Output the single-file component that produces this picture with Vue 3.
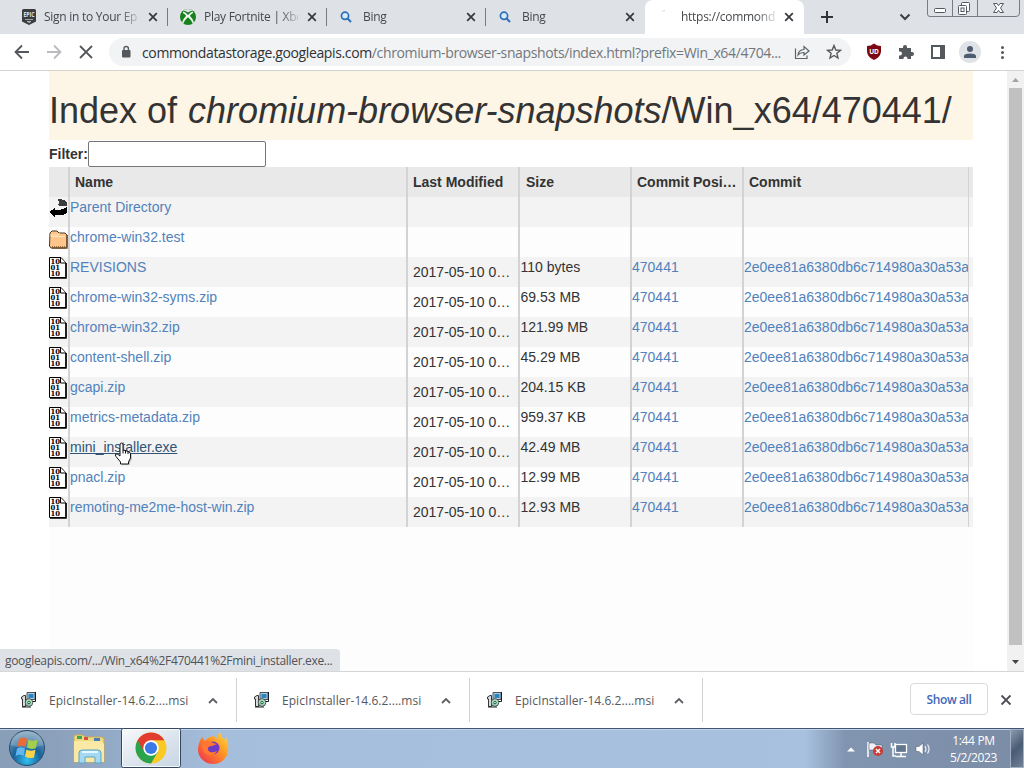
<template>
  <div class="screen">
    <header class="tab-strip">
      <div class="tabs">
        <div v-for="(tab, i) in tabs" :key="i" class="tab" :class="{ active: tab.active }">
          <span class="favicon">
            <svg v-if="tab.icon === 'epic'" width="16" height="18" viewBox="0 0 16 18">
              <path d="M2.500 1H13.500Q15 1 15 2.500V13.500L8 17L1 13.500V2.500Q1 1 2.500 1Z" fill="#3a3c3f" />
              <text x="2.400" y="9" font-size="7.500" font-weight="700" textLength="11.200" lengthAdjust="spacingAndGlyphs" fill="#dfe1e4">EPIC</text>
              <path d="M4 11.500H12M6 13.500H10L8 14.500Z" stroke="#b9bcc0" stroke-width=".8" fill="#b9bcc0" />
            </svg>
            <svg v-else-if="tab.icon === 'xbox'" width="16" height="16" viewBox="0 0 16 16">
              <circle cx="8" cy="8" r="8" fill="#17811b" />
              <path d="M3 1.900Q5.300 1.600 8 3.500Q10.700 1.600 13 1.900Q11.700 .2 8 0Q4.300 .2 3 1.900Z" fill="#dee1e6" />
              <path d="M3.200 2.600Q5 2.800 8 6Q11 2.800 12.800 2.600L13.200 4Q11.500 4.500 9.800 6.800Q13.500 10.500 14 13.500L12.800 14.500Q11.500 11 8 8.300Q4.500 11 3.200 14.500L2 13.500Q2.500 10.500 6.200 6.800Q4.500 4.500 2.800 4Z" fill="#eef5ee" />
            </svg>
            <svg v-else-if="tab.icon === 'search'" width="14" height="14" viewBox="0 0 14 14">
              <circle cx="6" cy="5.800" r="3.600" fill="#d9e9fa" stroke="#2b71b8" stroke-width="1.700" />
              <path d="M8.600 8.500L12 12" stroke="#2b71b8" stroke-width="2" />
            </svg>
            <svg v-else width="16" height="16" viewBox="0 0 16 16">
              <path d="M5 2.200Q6.500 1.400 8 1.700" stroke="#d3d6da" fill="none" />
            </svg>
          </span>
          <span class="tab-title">{{ tab.title }}</span>
          <svg class="tab-close" width="10" height="10" viewBox="0 0 10 10">
            <path d="M1.200 1.200L8.800 8.800M8.800 1.200L1.200 8.800" stroke="#35383c" stroke-width="1.700" />
          </svg>
        </div>
      </div>
      <svg class="new-tab" width="14" height="14" viewBox="0 0 14 14">
        <path d="M7 1V13M1 7H13" stroke="#303337" stroke-width="2" />
      </svg>
      <svg class="tab-search" width="12" height="8" viewBox="0 0 12 8">
        <path d="M1.500 1.500L6 6L10.500 1.500" stroke="#3c4043" stroke-width="2" fill="none" />
      </svg>
      <div class="window-buttons">
        <svg width="93" height="17" viewBox="0 0 93 17" fill="none" stroke="#777b82">
          <path d="M.5 0V14Q.5 16.500 3 16.500H89Q92.500 16.500 92.500 13V0M25.500 0V16M50.500 0V16" />
          <rect x="7.500" y="8.500" width="11" height="4" rx="1" fill="#fff" stroke="#555960" />
          <g fill="#fff" stroke="#555960">
            <rect x="34.500" y="2.500" width="8" height="9" rx="1" />
            <rect x="31.500" y="5.500" width="8" height="9" rx="1" />
            <rect x="34" y="8" width="3" height="3.500" />
            <path d="M66.500 3.500H70L71.500 5.700L73 3.500H76.500L73.500 8L76.500 12.500H73L71.500 10.300L70 12.500H66.500L69.500 8Z" />
          </g>
        </svg>
      </div>
    </header>

    <nav class="toolbar">
      <svg class="nav-icons" width="109" height="36" viewBox="0 0 109 36" fill="none" stroke-width="1.800">
        <path d="M29 18H16M22 11.500L15.500 18L22 24.500" stroke="#54575b" />
        <path d="M47 18H60M54 11.500L60.500 18L54 24.500" stroke="#b9bbbe" />
        <path d="M80 12L92 24M92 12L80 24" stroke="#54575b" />
      </svg>
      <div class="omnibox">
        <svg width="10" height="14" viewBox="0 0 10 14">
          <rect x="1" y="5" width="8.500" height="7.500" rx="1" fill="#55585c" />
          <path d="M3 5V3.500Q3 1.500 5.200 1.500Q7.400 1.500 7.400 3.500V5" fill="none" stroke="#55585c" stroke-width="1.400" />
        </svg>
        <span class="url"><b>commondatastorage.googleapis.com</b>/chromium-browser-snapshots/index.html?prefix=Win_x64/4704...</span>
        <svg class="share" width="16" height="16" viewBox="0 0 16 16" fill="none" stroke="#5f6368" stroke-width="1.200">
          <path d="M1.500 4.500V14.500H13V11.500M4 11Q4.500 6 10 5.500V2.500L15 7L10 11V8.500Q6 8.500 4 11Z" />
        </svg>
        <svg class="star" width="16" height="16" viewBox="0 0 16 16">
          <path d="M8 1.500L9.800 6L14.500 6.300L10.900 9.300L12 14L8 11.500L4 14L5.100 9.300L1.500 6.300L6.200 6Z" fill="none" stroke="#55585c" stroke-width="1.400" />
        </svg>
      </div>
      <svg class="extensions" width="173" height="36" viewBox="851 34 173 36">
        <path d="M867 46Q871 46 874 43.500Q877 46 881 46V52Q880 57.500 874 60Q868 57.500 867 52Z" fill="#7d0712" />
        <text x="874" y="54" font-size="6.500" font-weight="700" text-anchor="middle" fill="#fff">UD</text>
        <path d="M899 48H903V47A2 2 0 0 1 907 47V48H911V52H912A2 2 0 0 1 912 56H911V59H907.500V58.500A2 2 0 0 0 903.500 58.500V59H899V55.500H900A2 2 0 0 0 900 51.500H899Z" fill="#55585c" />
        <rect x="932" y="46" width="12" height="12" fill="#fff" stroke="#55585c" stroke-width="2" />
        <path d="M940 45H945V59H940Z" fill="#55585c" />
        <circle cx="970" cy="52" r="11" fill="#dfe2e6" />
        <circle cx="970" cy="49" r="3" fill="#4d5c70" />
        <path d="M964 58V56Q964 53.500 970 53.500Q976 53.500 976 56V58Z" fill="#4d5c70" />
        <g fill="#55585c"><circle cx="1002.500" cy="47.500" r="1.500" /><circle cx="1002.500" cy="52.500" r="1.500" /><circle cx="1002.500" cy="57.500" r="1.500" /></g>
      </svg>
    </nav>

    <main class="viewport">
      <div class="page">
        <h1>Index of <i>chromium-browser-snapshots</i>/Win_x64/470441/</h1>
        <div class="filter"><label for="filter">Filter:</label><input id="filter" v-model="filter" type="text"></div>
        <div class="listing">
          <div class="row head">
            <span class="cell"></span>
            <span v-for="name in columns" :key="name" class="cell">{{ name }}</span>
          </div>
          <div v-for="file in files" :key="file.name" class="row">
            <span class="cell icon">
              <svg v-if="file.kind === 'up'" width="20" height="22" viewBox="0 0 20 22" shape-rendering="crispEdges">
                <path d="M9 1H12L14 2H16L18 5V8H11L8 7L10 5Z" fill="#3c3c3c" />
                <path d="M0 14L6 10V12Q14 12 18 9V15Q14 18 6 17V19Z" fill="#000" />
              </svg>
              <svg v-else-if="file.kind === 'dir'" width="20" height="22" viewBox="0 0 20 22">
                <path d="M1 5L3 3H8L10 5H16L18 7V18L17 20H2L.5 18Z" fill="#ffc58a" stroke="#49361f" />
                <path d="M1 7H9L11 5.500M2 8.500H16" fill="none" stroke="#ffe3bd" />
                <path d="M18 7V20H3" fill="none" stroke="#6e5130" stroke-width="1.500" />
                <path d="M3 18.500H16" stroke="#a66f37" stroke-dasharray="1 1" />
              </svg>
              <svg v-else width="20" height="22" viewBox="0 0 20 22">
                <path d="M.5 .5H12L17 6V20.500H.5Z" fill="#fff" stroke="#000" />
                <path d="M17 6V21H1" fill="none" stroke="#000" stroke-width="1.500" />
                <path d="M11.500 1V6H17" fill="#fff" stroke="#000" />
                <text x="1.500" y="7" class="bits" textLength="9.500" lengthAdjust="spacingAndGlyphs">10</text>
                <text x="1.500" y="13" class="bits" textLength="9.500" lengthAdjust="spacingAndGlyphs">01</text>
                <text x="1.500" y="19" class="bits" textLength="9.500" lengthAdjust="spacingAndGlyphs">10</text>
              </svg>
            </span>
            <span class="cell"><a :class="{ hover: file.hover }">{{ file.name }}</a></span>
            <span class="cell date">{{ file.size ? '2017-05-10 0…' : '' }}</span>
            <span class="cell size">{{ file.size }}</span>
            <span class="cell"><a v-if="file.size">470441</a></span>
            <span class="cell"><a v-if="file.size">2e0ee81a6380db6c714980a30a53a</a></span>
          </div>
        </div>
      </div>
      <div class="scrollbar">
        <svg width="17" height="17" viewBox="0 0 17 17"><path d="M5 11L8.500 7L12 11Z" fill="#a3a3a3" /></svg>
        <div class="thumb"></div>
        <svg width="17" height="18" viewBox="0 0 17 18"><path d="M5 7L8.500 11L12 7Z" fill="#454545" /></svg>
      </div>
      <div class="status">googleapis.com/.../Win_x64%2F470441%2Fmini_installer.exe...</div>
      <svg class="cursor" width="20" height="24" viewBox="0 0 20 24">
        <path d="M6 3Q6 1 7.500 1Q9 1 9 3V8L11 8.500L13 9L15 10Q16.500 10.500 16.500 12V16L14.500 20V22H6.500V20L2 14.500Q.5 12.500 2 12Q3.500 11.500 6 14Z" transform="translate(1.500 1)" fill="#999" opacity=".5" />
        <path d="M6 3Q6 1 7.500 1Q9 1 9 3V8L11 8.500L13 9L15 10Q16.500 10.500 16.500 12V16L14.500 20V22H6.500V20L2 14.500Q.5 12.500 2 12Q3.500 11.500 6 14Z" fill="#fff" stroke="#111" />
        <path d="M9 8V11.500M11.500 8.500V11.500M14 9.500V12" stroke="#111" />
      </svg>
    </main>

    <section class="downloads">
      <div v-for="n in 3" :key="n" class="download">
        <svg width="18" height="18" viewBox="0 0 18 18">
          <path d="M7 1.500H15V8.500H7Z" fill="#bfc9d2" stroke="#45525d" />
          <path d="M8.500 3H13.500V7H8.500Z" fill="#2187c9" />
          <path d="M15.500 1V10.500H11" fill="none" stroke="#151b20" />
          <path d="M1.500 6L4 4.500H5.500V15.500H2.500V8H1.500Z" fill="#d9dde0" stroke="#333" />
          <circle cx="9" cy="11.500" r="3.800" fill="#b8dcc9" stroke="#29352f" stroke-width=".8" />
          <path d="M5.500 12.500L9 9.500L11.500 12L9 15Z" fill="#8ac4a5" />
          <circle cx="9" cy="11.500" r="1.200" fill="#fff" stroke="#11663b" />
          <path d="M2 16H11" stroke="#222" />
        </svg>
        <span class="file">EpicInstaller-14.6.2....msi</span>
        <svg width="10" height="7" viewBox="0 0 10 7"><path d="M1 6L5 2L9 6" fill="none" stroke="#5c6064" stroke-width="1.800" /></svg>
      </div>
      <button class="show-all">Show all</button>
      <svg class="dismiss" width="12" height="12" viewBox="0 0 12 12"><path d="M1.500 1.500L10.500 10.500M10.500 1.500L1.500 10.500" stroke="#4d5054" stroke-width="1.800" /></svg>
    </section>

    <footer class="taskbar">
      <svg width="250" height="40" viewBox="0 0 250 40">
        <defs>
          <radialGradient id="orb" cx=".5" cy=".85" r=".8">
            <stop offset="0" stop-color="#31c0f0" /><stop offset=".5" stop-color="#17629a" /><stop offset="1" stop-color="#7fa1b9" />
          </radialGradient>
          <linearGradient id="fox" x1="1" y1="0" x2="0" y2="1">
            <stop offset="0" stop-color="#ffe14a" /><stop offset=".4" stop-color="#ff9823" /><stop offset="1" stop-color="#ef274f" />
          </linearGradient>
          <linearGradient id="taskbtn" x1="0" y1="0" x2="1" y2="1">
            <stop offset="0" stop-color="#f7f9fb" /><stop offset=".6" stop-color="#d9e2ec" /><stop offset="1" stop-color="#c7d5e4" />
          </linearGradient>
        </defs>
        <circle cx="27" cy="20" r="17.500" fill="url(#orb)" stroke="#284c6c" />
        <path d="M10.500 17Q12 4 27 3.500Q42 4 43.500 17Q27 23 10.500 17Z" fill="#fff" opacity=".2" />
        <path d="M19 11Q23 8 27 11L25.500 19Q21.500 16.500 17.500 19Z" fill="#ed6a35" />
        <path d="M28.500 11.500Q32.500 14 37.500 11.500L36 20Q31.500 22 27 19.500Z" fill="#a3cf4a" />
        <path d="M17 20.500Q21 18 25 20.500L23.500 28Q19.500 25.500 15.500 28Z" fill="#62b5ee" />
        <path d="M26.500 21.500Q31 24 35.500 21.500L34 29.500Q29.500 31 25 28.500Z" fill="#fbd34b" />

        <path d="M74 9Q74 7 76 7H83L85 9H101Q104 9 104 11V34H74Z" fill="#efda83" stroke="#c5aa57" />
        <path d="M77 8H82V11H77Z" fill="#3aa853" /><path d="M84 9H88V12H84Z" fill="#d45140" /><path d="M94 10H100V13H94Z" fill="#477fb5" />
        <path d="M74 13H101L104 16V34H74Z" fill="#fae9a4" />
        <path d="M79 35V25Q79 22 82 22H98Q101 22 101 25V35H95V29H85V35Z" fill="#a5d9f1" stroke="#58a5ce" />
        <path d="M82 24H98" stroke="#e5f7ff" stroke-width="2" />

        <rect x="121.500" y=".5" width="59" height="39" rx="2" fill="url(#taskbtn)" stroke="#36485e" />
        <rect x="122.500" y="1.500" width="57" height="37" rx="1" fill="none" stroke="#fff" opacity=".8" />
        <circle cx="151" cy="20" r="15.500" fill="#f9c924" />
        <path d="M151 20L137.580 12.250A15.500 15.500 0 0 0 151 35.500L157.700 23.900Z" fill="#2ba24c" />
        <path d="M151 20L144.300 23.900L137.580 12.250A15.500 15.500 0 0 1 164.420 12.250H151Z" fill="#e23b30" />
        <circle cx="151" cy="20" r="7.750" fill="#fff" /><circle cx="151" cy="20" r="6.100" fill="#3979e8" />

        <path d="M202 9L205 13Q208 9 213 8Q216 9 217 11Q217 7 220 4Q221 9 225 12L226 9Q229 15 228 21A15 14.500 0 0 1 198 22Q198 15 202 9Z" fill="url(#fox)" />
        <circle cx="213" cy="20" r="6.500" fill="#6d3ac6" />
        <path d="M203 14Q209 11 213 15L217 16L212 18Q207 18 208 22Q210 26 217 23Q213 30 206 26Q200 22 203 14Z" fill="#ff7730" />
      </svg>
      <svg class="tray" width="92" height="40" viewBox="844 728 92 40">
        <path d="M847 751.500L851 747.500L855 751.500Z" fill="#fff" />
        <path d="M868 742V757" stroke="#fff" stroke-width="1.500" /><path d="M869 743H874L876 745H882V752H876L874 750H869Z" fill="#eef2f7" stroke="#47566b" stroke-width=".5" />
        <circle cx="878" cy="751" r="5" fill="#c93b35" /><path d="M876 749L880 753M880 749L876 753" stroke="#fff" stroke-width="1.500" />
        <rect x="895.500" y="744.500" width="11" height="8" fill="#61768f" stroke="#fff" stroke-width="1.300" />
        <path d="M901 753V756M896 756.500H906M893 747V756H896M891.500 743V747H895V743" fill="none" stroke="#fff" stroke-width="1.500" />
        <path d="M916 746.500H919L923 743V755L919 751.500H916Z" fill="#fff" stroke="#46556a" stroke-width=".5" />
        <path d="M925 746Q927 749 925 752M927.500 744.500Q930.500 749 927.500 753.500" fill="none" stroke="#e8eef5" stroke-width="1.200" />
      </svg>
      <div class="clock"><div class="time">1:44 PM</div><div class="day">5/2/2023</div></div>
      <div class="peek"></div>
    </footer>
  </div>
</template>

<script setup>
import { ref } from 'vue'

const filter = ref('')

const tabs = [
  { title: 'Sign in to Your Ep', icon: 'epic' },
  { title: 'Play Fortnite | Xbo', icon: 'xbox' },
  { title: 'Bing', icon: 'search' },
  { title: 'Bing', icon: 'search' },
  { title: 'https://commond', icon: 'loading', active: true },
]

const columns = ['Name', 'Last Modified', 'Size', 'Commit Position', 'Commit']

const files = [
  { name: 'Parent Directory', kind: 'up' },
  { name: 'chrome-win32.test', kind: 'dir' },
  { name: 'REVISIONS', size: '110 bytes' },
  { name: 'chrome-win32-syms.zip', size: '69.53 MB' },
  { name: 'chrome-win32.zip', size: '121.99 MB' },
  { name: 'content-shell.zip', size: '45.29 MB' },
  { name: 'gcapi.zip', size: '204.15 KB' },
  { name: 'metrics-metadata.zip', size: '959.37 KB' },
  { name: 'mini_installer.exe', size: '42.49 MB', hover: true },
  { name: 'pnacl.zip', size: '12.99 MB' },
  { name: 'remoting-me2me-host-win.zip', size: '12.93 MB' },
]
</script>

<style>
body {
  margin: 0;
  overflow: hidden;
}
</style>

<style scoped>
.screen {
  width: 1024px;
  height: 768px;
  display: flex;
  flex-direction: column;
  overflow: hidden;
  background: #fff;
  font-family: "Open Sans", "Noto Sans", sans-serif;
  color: #333;
}
svg {
  display: block;
  flex-shrink: 0;
}

.tab-strip {
  height: 34px;
  flex-shrink: 0;
  display: flex;
  align-items: center;
  background: #dee1e6;
}
.tabs {
  display: flex;
  margin-left: 9px;
  height: 34px;
}
.tab {
  width: 159px;
  height: 34px;
  box-sizing: border-box;
  padding-left: 12px;
  display: flex;
  align-items: center;
  background: linear-gradient(#777b80, #777b80) right 8px / 1px 18px no-repeat;
}
.tab:nth-child(4) {
  background: none;
}
.tab.active {
  background: #fff;
  border-radius: 8px 8px 0 0;
}
.favicon {
  width: 24px;
}
.tab:first-child .favicon {
  width: 23px;
}
.tab:first-child .tab-title {
  width: 95px;
}
.tab-title {
  width: 94px;
  overflow: hidden;
  white-space: nowrap;
  font-size: 12px;
  line-height: 18px;
  letter-spacing: -0.27px;
  color: #45494d;
  mask-image: linear-gradient(90deg, #000 76px, transparent 98px);
}
.tab-close {
  margin-left: 9px;
}
.new-tab {
  margin-left: 16px;
}
.tab-search {
  margin-left: 65px;
}
.window-buttons {
  align-self: flex-start;
  margin-left: 16px;
}

.toolbar {
  height: 36px;
  flex-shrink: 0;
  display: flex;
  border-bottom: 1px solid #d4d4cf;
  background: #fff;
}
.omnibox {
  width: 742px;
  height: 28px;
  margin-top: 4px;
  box-sizing: border-box;
  padding-left: 12px;
  display: flex;
  align-items: center;
  border-radius: 14px;
  background: #f1f3f4;
}
.url {
  width: 640px;
  margin-left: 11px;
  font-size: 14px;
  letter-spacing: -0.37px;
  white-space: nowrap;
  color: #73777b;
}
.url b {
  font-weight: 400;
  color: #303236;
}
.share {
  margin-left: 12px;
}
.star {
  margin-left: 16px;
}

.viewport {
  position: relative;
  height: 600px;
  flex-shrink: 0;
  display: flex;
  justify-content: space-between;
  overflow: hidden;
}
.page {
  width: 924px;
  margin-left: 49px;
  background: #fdfdfd;
  font-family: "Liberation Sans", Arial, sans-serif;
  font-size: 14px;
  line-height: 20px;
}
h1 {
  height: 69px;
  margin: 0;
  box-sizing: border-box;
  padding-top: 20px;
  background: #fdf5e6;
  font-size: 36px;
  font-weight: 400;
  line-height: 40px;
  white-space: nowrap;
}
h1 i {
  margin-left: 1px;
}
.filter {
  height: 27px;
  display: flex;
  align-items: center;
  background: #fff;
}
.filter label {
  font-weight: 700;
}
.filter input {
  width: 178px;
  height: 26px;
  box-sizing: border-box;
  border: 1px solid #767676;
  border-radius: 2px;
  background: #fff;
  outline: none;
}
.row {
  display: grid;
  grid-template-columns: 21px 338px 112px 112px 112px 225px;
  height: 30px;
  background: #fdfdfd;
}
.row:nth-child(even) {
  background: #f3f3f3;
}
.row.head {
  background: #e9e9e9;
  font-weight: 700;
}
.cell {
  height: 30px;
  box-sizing: border-box;
  overflow: hidden;
  white-space: nowrap;
  border-right: 2px solid #d3d3d3;
}
.cell:last-child {
  border-right-width: 1px;
}
.head .cell {
  padding: 5px 3px 0 5px;
  text-overflow: ellipsis;
}
.head .cell:nth-child(4) {
  padding-left: 6px;
}
.cell.date {
  padding: 5px 0 0 5px;
}
.cell.size {
  padding-left: 0.5px;
}
.row:nth-child(2) .icon,
.row:nth-child(3) .icon {
  padding-top: 1px;
}
.bits {
  font: 700 7px "DejaVu Serif", serif;
  fill: #000;
}
a {
  color: #5182bb;
}
a.hover {
  color: #315375;
  text-decoration: underline;
}

.scrollbar {
  width: 17px;
  background: #f1f1f1;
}
.thumb {
  width: 13px;
  height: 557px;
  margin: 0 2px 8px;
  background: #c1c1c1;
}
.status {
  position: absolute;
  left: 0;
  bottom: 0;
  width: 340px;
  height: 22px;
  box-sizing: border-box;
  padding-left: 5px;
  border-radius: 0 4px 0 0;
  background: #dee1e6;
  font-size: 12px;
  line-height: 23px;
  letter-spacing: -0.32px;
  white-space: nowrap;
  color: #505357;
}
.cursor {
  position: absolute;
  left: 114px;
  top: 371px;
}

.downloads {
  height: 57px;
  flex-shrink: 0;
  box-sizing: border-box;
  border-top: 1px solid #d5d6d8;
  display: flex;
  align-items: center;
  background: #fff;
}
.download {
  width: 233px;
  height: 44px;
  box-sizing: border-box;
  padding-left: 16px;
  display: flex;
  align-items: center;
  border-right: 1px solid #d0d1d3;
}
.download:first-child {
  width: 237px;
  padding-left: 20px;
}
.file {
  width: 145px;
  margin: 1px 14px 0 11px;
  font-size: 12px;
  letter-spacing: 0.05px;
  white-space: nowrap;
  color: #55585c;
}
.show-all {
  width: 78px;
  height: 32px;
  margin: 0 0 2px auto;
  padding: 0;
  border: 1px solid #d8dade;
  border-radius: 4px;
  background: #fff;
  font: 600 12px "Open Sans", "Noto Sans", sans-serif;
  letter-spacing: -0.4px;
  color: #4268b8;
}
.dismiss {
  margin: 0 12px 0 12px;
}

.taskbar {
  height: 40px;
  flex-shrink: 0;
  display: flex;
  background:
    linear-gradient(#405674 0 1px, #c4d5e7 1px 2px, transparent 2px),
    linear-gradient(90deg, #899eb7 0, #8ba1bc 60px, #a5bedb 220px, #a7c1de 805px, #8195b0 845px, #7b8ca6 1024px);
}
.tray {
  margin-left: 594px;
}
.clock {
  width: 74px;
  padding-top: 4px;
  box-sizing: border-box;
  padding-left: 1px;
  font-size: 12px;
  line-height: 17px;
  letter-spacing: -0.35px;
  text-align: center;
  color: #fff;
}
.peek {
  width: 14px;
  height: 39px;
  margin-top: 1px;
  box-sizing: border-box;
  border: 1px solid #a5b1c2;
  background: linear-gradient(135deg, #8d9aad, #4a5b74 50%, #718198);
}
</style>
